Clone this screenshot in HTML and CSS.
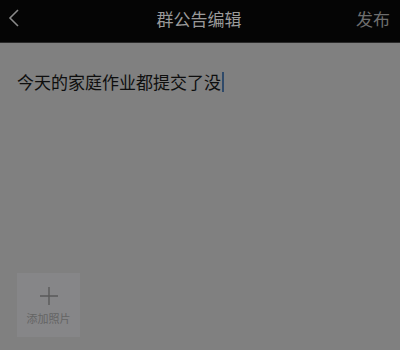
FILE: index.html
```html
<!DOCTYPE html>
<html>
<head>
<meta charset="utf-8">
<link rel="stylesheet" href="styles.css">
</head>
<body>
<div class="page">
  <header class="topbar">
    <div class="back">
      <svg width="12" height="20" viewBox="0 0 12 20"><path d="M10 2 L2 10 L10 18" fill="none" stroke="#8a8a8a" stroke-width="1.6"/></svg>
    </div>
    <div class="title">群公告编辑</div>
    <div class="publish">发布</div>
  </header>
  <main class="content">
    <div class="text">今天的家庭作业都提交了没<span class="cursor"></span></div>
    <div class="spacer"></div>
    <div class="photo">
      <svg width="20" height="20" viewBox="0 0 20 20"><path d="M10 1 V19 M1 10 H19" stroke="#5a5a5a" stroke-width="1.4"/></svg>
      <div class="photo-label">添加照片</div>
    </div>
  </main>
</div>
</body>
</html>
```
FILE: styles.css
```css
html, body {
  margin: 0;
  padding: 0;
}
body {
  width: 400px;
  height: 350px;
  overflow: hidden;
  background: #808080;
  font-family: "Noto Sans CJK SC", "Noto Sans", sans-serif;
}
.page {
  display: flex;
  flex-direction: column;
  height: 350px;
}
.topbar {
  height: 43px;
  background: #050505;
  display: flex;
  align-items: center;
  position: relative;
  border-bottom: 1px solid #2a2a2a;
  box-sizing: border-box;
}
.back {
  width: 30px;
  padding-left: 8px;
  display: flex;
  align-items: center;
  margin-top: -6px;
}
.title {
  flex: 1;
  text-align: center;
  color: #9a9a9a;
  font-size: 17px;
  margin-top: -6px;
  padding-left: 14px;
}
.publish {
  width: 44px;
  color: #6e6e6e;
  font-size: 17px;
  margin-top: -6px;
  padding-right: 10px;
  text-align: right;
}
.content {
  flex: 1;
  display: flex;
  flex-direction: column;
  padding: 0 16px 13px 17px;
}
.text {
  margin-top: 24px;
  font-size: 17px;
  line-height: 30px;
  color: #0e0e0e;
  display: flex;
  align-items: center;
}
.cursor {
  display: inline-block;
  width: 2px;
  height: 20px;
  background: #2f4a6a;
  margin-left: 1px;
}
.spacer {
  flex: 1;
}
.photo {
  width: 63px;
  height: 64px;
  background: #868688;
  display: flex;
  flex-direction: column;
  align-items: center;
  padding-top: 13px;
  box-sizing: border-box;
}
.photo-label {
  font-size: 11px;
  color: #646464;
  margin-top: 5px;
  line-height: 14px;
}
```
